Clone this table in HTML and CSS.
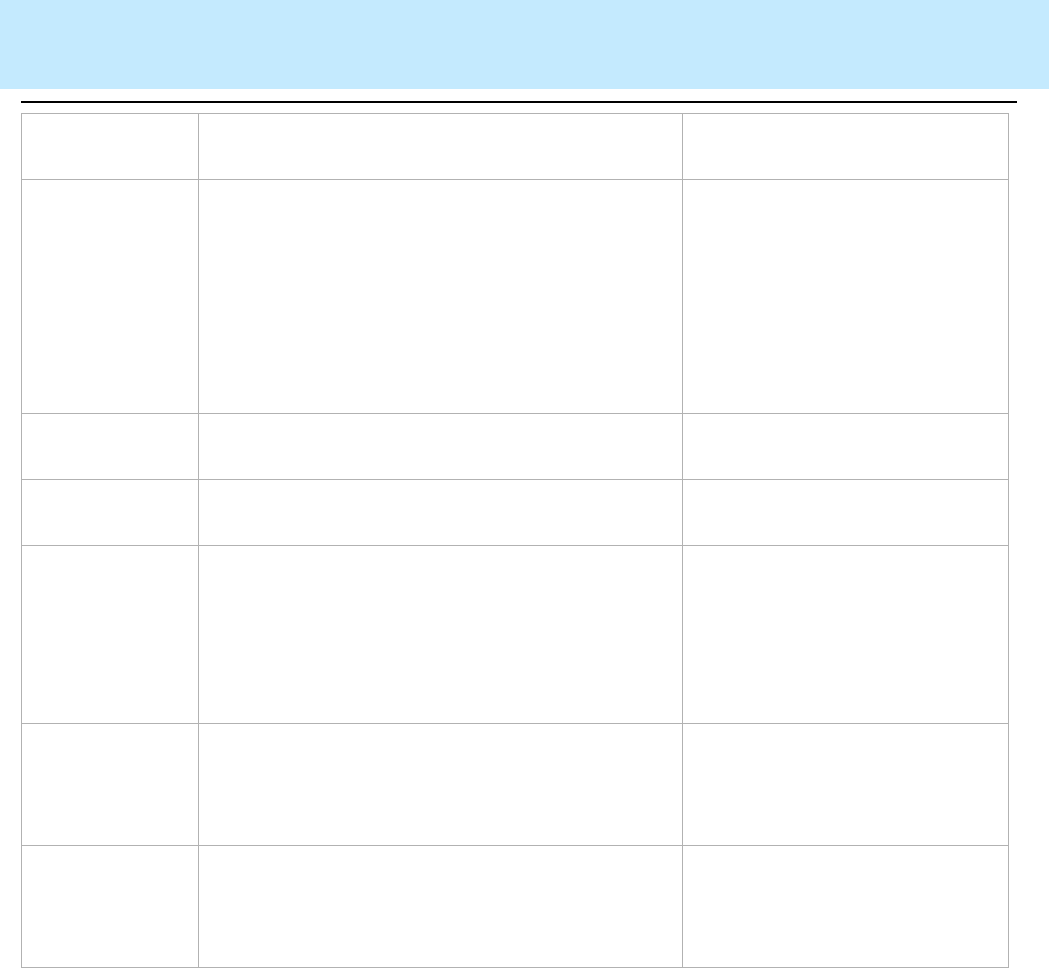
FILE: index.html
```html
<!DOCTYPE html>
<html>
<head>
<meta charset="utf-8">
<link rel="stylesheet" href="styles.css">
</head>
<body>
<div class="banner"></div>
<div class="rule"></div>
<div class="grid">
  <div class="cell r1"></div><div class="cell r1"></div><div class="cell r1"></div>
  <div class="cell r2"></div><div class="cell r2"></div><div class="cell r2"></div>
  <div class="cell r3"></div><div class="cell r3"></div><div class="cell r3"></div>
  <div class="cell r4"></div><div class="cell r4"></div><div class="cell r4"></div>
  <div class="cell r5"></div><div class="cell r5"></div><div class="cell r5"></div>
  <div class="cell r6"></div><div class="cell r6"></div><div class="cell r6"></div>
  <div class="cell r7"></div><div class="cell r7"></div><div class="cell r7"></div>
</div>
</body>
</html>
```
FILE: styles.css
```css
html, body {
  margin: 0;
  padding: 0;
  background: #ffffff;
  font-family: "Liberation Sans", Arial, sans-serif;
  overflow: hidden;
}
.banner {
  height: 89px;
  background: #c4eafe;
}
.rule {
  margin: 12px 0 0 21px;
  width: 996px;
  height: 2px;
  background: #000000;
}
.grid {
  margin: 10px 0 0 21px;
  width: 988px;
  box-sizing: border-box;
  display: grid;
  grid-template-columns: 176px 483px 325px;
  grid-template-rows: 65px 233px 65px 65px 177px 121px 121px;
  gap: 1px;
  padding: 1px;
  background: #b2b2b2;
}
.cell {
  background: #ffffff;
}
```
